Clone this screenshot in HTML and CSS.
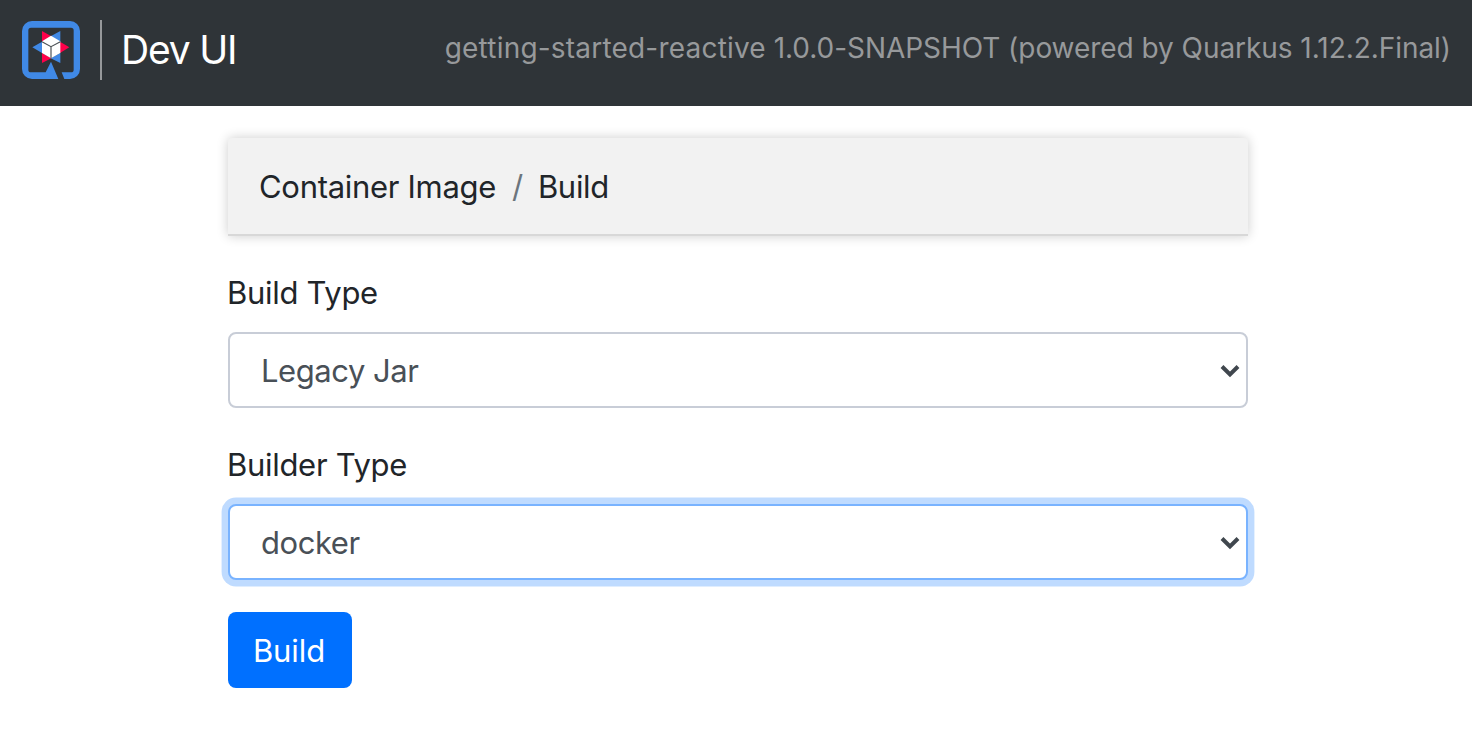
FILE: index.html
```html
<!DOCTYPE html>
<html lang="en">
<head>
<meta charset="utf-8">
<title>Dev UI</title>
<link rel="stylesheet" href="styles.css">
</head>
<body>
<header class="navbar">
  <a class="brand">
    <svg class="logo" viewBox="0 0 174 174" aria-hidden="true">
      <path fill="#4089e6" d="M30 0H144A30 30 0 0 1 174 30V144A30 30 0 0 1 144 174H127L119 154H147A8 8 0 0 0 155 146V28A8 8 0 0 0 147 20H27A8 8 0 0 0 19 28V146A8 8 0 0 0 27 154H71L87 122L109 174H30A30 30 0 0 1 0 144V30A30 30 0 0 1 30 0Z"/>
      <path fill="#ff004a" d="M60 30L88 46L60 63ZM142 79L114 96V62ZM60 126V96L88 112Z"/>
      <path fill="#4089e6" d="M115 30V63L86 46ZM31 79L60 62V96ZM115 126L86 112L115 96Z"/>
      <path fill="#fff" d="M87 44L115 61V96L87 112L60 96V61Z"/>
      <path fill="none" stroke="#4b5054" stroke-width="3.5" d="M60 62L87 77L115 62M87 77V112"/>
    </svg>
    <span class="brand-name">Dev UI</span>
  </a>
  <span class="app-info"><span class="app-name">getting-started-reactive</span> 1.0.0-SNAPSHOT (powered by Quarkus 1.12.2.Final)</span>
</header>
<main class="container">
  <nav class="breadcrumb">
    <span class="crumb">Container Image</span>
    <span class="separator">/</span>
    <span class="crumb-current">Build</span>
  </nav>
  <form>
    <div class="form-group">
      <label class="label" for="buildType">Build Type</label>
      <div class="select-wrap">
        <select class="select" id="buildType"><option>Legacy Jar</option></select>
        <svg class="chevron" viewBox="0 0 20 14" aria-hidden="true"><path d="M2 2.5L10 10.5L18 2.5"/></svg>
      </div>
    </div>
    <div class="form-group">
      <label class="label" for="builderType">Builder Type</label>
      <div class="select-wrap">
        <select class="select select-active" id="builderType"><option>docker</option></select>
        <svg class="chevron" viewBox="0 0 20 14" aria-hidden="true"><path d="M2 2.5L10 10.5L18 2.5"/></svg>
      </div>
    </div>
    <button class="button" type="button">Build</button>
  </form>
</main>
</body>
</html>
```
FILE: styles.css
```css
* {
  box-sizing: border-box;
}

body {
  margin: 0;
  background: #fff;
  color: #212529;
  font: 430 31px/48px Inter, "Liberation Sans", sans-serif;
}

.navbar {
  display: flex;
  justify-content: space-between;
  align-items: flex-start;
  height: 106px;
  padding: 20px 21px 0 22px;
  background: #2f3438;
}

.brand {
  display: flex;
  color: #fff;
}

.logo {
  width: 58px;
  height: 58px;
  margin-top: 1px;
}

.brand-name {
  height: 60px;
  margin-left: 20px;
  padding-left: 19px;
  border-left: 2px solid #97999b;
  font-size: 39px;
  line-height: 60px;
  letter-spacing: -1.2px;
}

.app-info {
  padding-top: 4px;
  color: #97999b;
  font-size: 28px;
  letter-spacing: -0.05px;
  white-space: nowrap;
}

.app-name {
  letter-spacing: 0.2px;
}

.container {
  width: 1020px;
  margin: 32px 0 0 228px;
}

.breadcrumb {
  display: flex;
  height: 98px;
  margin-bottom: 32px;
  padding: 25px 31px;
  border-bottom: 2px solid #d8d8d8;
  border-radius: 4px 4px 0 0;
  background: #f2f2f2;
  box-shadow: 0 0 12px rgba(0, 0, 0, 0.2);
  letter-spacing: -0.3px;
}

.separator {
  margin: 0 15px 0 16px;
  color: #6c757d;
}

.form-group {
  margin-bottom: 32px;
}

.label {
  display: block;
  height: 48px;
  margin: 0 0 16px -1px;
  padding-top: 1px;
  letter-spacing: -0.3px;
}

.select-wrap {
  position: relative;
  height: 76px;
}

.select {
  display: block;
  width: 100%;
  height: 76px;
  padding: 2px 31px 0;
  border: 2px solid #c8cdd7;
  border-radius: 8px;
  outline: none;
  background: #fff;
  color: #495057;
  font: inherit;
  letter-spacing: -0.45px;
  appearance: none;
}

.select-active {
  border-color: #79b3ff;
  box-shadow: 0 0 0 6.4px #bfdbff;
}

.chevron {
  position: absolute;
  top: 32px;
  right: 8px;
  width: 20px;
  height: 14px;
  fill: none;
  stroke: #40474e;
  stroke-width: 4;
  pointer-events: none;
}

.button {
  display: block;
  width: 124px;
  height: 76px;
  padding: 2px 2px 0 0;
  border: 0;
  border-radius: 8px;
  background: #0070ff;
  color: #fff;
  font: inherit;
  letter-spacing: -0.1px;
}
```
